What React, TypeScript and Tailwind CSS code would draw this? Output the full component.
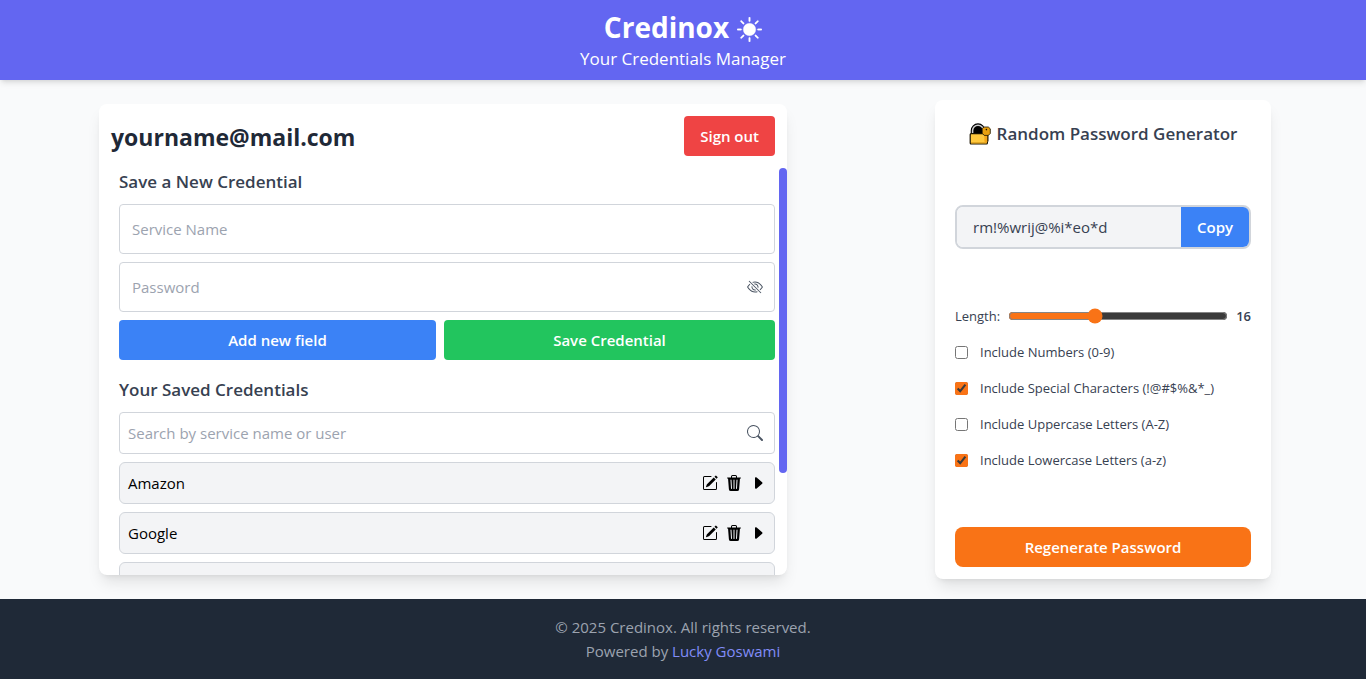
import { useEffect, useRef, useState } from 'react';
import {
  BsBrightnessHighFill,
  BsCaretRightFill,
  BsEyeSlash,
  BsPencilSquare,
  BsSearch,
  BsTrash3Fill,
} from 'react-icons/bs';

const services = ['Amazon', 'Google', 'Netflix', 'Spotify', 'Twitter'];

function LockWithKey() {
  return (
    <svg viewBox="0 0 22 22" className="h-[22px] w-[22px] shrink-0" aria-hidden="true">
      <path d="M3.4 11.5V7.6a5.6 5.6 0 0 1 11.2 0v3.9z" fill="#000" stroke="#000" strokeWidth="3.4" />
      <path d="M3.6 11V7.6a5.4 5.4 0 0 1 10.8 0V11" fill="none" stroke="#d0d0d0" strokeWidth="1.5" />
      <rect x="1.2" y="10.6" width="17.2" height="10.4" rx="1" fill="#ffc83d" stroke="#1a1300" strokeWidth="1.2" />
      <path d="M2 19.8h15.6" stroke="#d99a1a" strokeWidth="1" />
      <path d="M15.4 11h3.2v7.6l-1.5 1.5-1.7-1.5z" fill="#f2a61a" />
      <path d="M19 12v6.5" stroke="#1a1300" strokeWidth="1" />
      <path
        d="M13.2 5.6l1.9-1.6h4.2l2 1.8v4.6l-2 2h-4.1l-2-2.2z"
        fill="#e8a010"
        stroke="#1a1300"
        strokeWidth="0.8"
        strokeLinejoin="round"
      />
      <circle cx="17.4" cy="6.6" r="0.8" fill="#1a1300" />
    </svg>
  );
}

function CredentialRow({ name }: { name: string }) {
  return (
    <li className="flex h-[42px] shrink-0 items-center justify-between rounded-md border border-[#d1d5db] bg-[#f3f4f6] px-2 text-black">
      <span>{name}</span>
      <span className="flex items-center gap-2">
        <button type="button" aria-label={`Edit ${name}`}><BsPencilSquare size={16} /></button>
        <button type="button" aria-label={`Delete ${name}`}><BsTrash3Fill size={16} /></button>
        <button type="button" aria-label={`Expand ${name}`}><BsCaretRightFill size={16} /></button>
      </span>
    </li>
  );
}

function CredentialPanel() {
  const area = useRef<HTMLDivElement>(null);
  const [bar, setBar] = useState({ size: 75, top: 0 });

  const measure = () => {
    const el = area.current;
    if (!el) return;
    setBar({
      size: (el.clientHeight / el.scrollHeight) * 100,
      top: (el.scrollTop / el.scrollHeight) * 100,
    });
  };

  useEffect(() => {
    measure();
    window.addEventListener('resize', measure);
    return () => window.removeEventListener('resize', measure);
  }, []);

  return (
    <section className="my-1 flex min-w-0 max-w-[688px] flex-1 flex-col overflow-hidden rounded-lg bg-white shadow-lg">
      <div className="flex items-center justify-between p-3">
        <h2 className="pt-px text-[23px] leading-8 font-bold text-[#1f2937]">yourname@mail.com</h2>
        <button type="button" className="h-10 rounded bg-[#ef4444] px-4 font-semibold text-white">Sign out</button>
      </div>
      <div className="flex min-h-0 flex-1">
        <div
          ref={area}
          onScroll={measure}
          className="flex min-w-0 flex-1 flex-col gap-4 overflow-y-auto pr-1 pb-2 pl-5 [scrollbar-width:none]"
        >
          <form className="flex flex-col gap-2" onSubmit={(e) => e.preventDefault()}>
            <h3 className="text-[17px] leading-7 font-semibold text-[#374151]">Save a New Credential</h3>
            <input
              aria-label="Service Name"
              placeholder="Service Name"
              className="h-[50px] w-full rounded border border-[#d1d5db] px-3 placeholder:text-[#9ca3af]"
            />
            <div className="flex h-[50px] items-center rounded border border-[#d1d5db] pr-[11px] pl-3">
              <input
                type="password"
                aria-label="Password"
                placeholder="Password"
                className="min-w-0 flex-1 outline-none placeholder:text-[#9ca3af]"
              />
              <button type="button" aria-label="Show password" className="text-[#4b5563]"><BsEyeSlash size={16} /></button>
            </div>
            <div className="flex gap-2 font-semibold text-white">
              <button type="button" className="h-10 flex-auto rounded bg-[#3b82f6]">Add new field</button>
              <button type="submit" className="h-10 flex-auto rounded bg-[#22c55e]">Save Credential</button>
            </div>
          </form>
          <div className="flex flex-col gap-2">
            <h3 className="text-[17px] leading-7 font-semibold text-[#374151]">Your Saved Credentials</h3>
            <div className="flex h-[42px] items-center rounded border border-[#d1d5db] pr-[11px] pl-2">
              <input
                aria-label="Search credentials"
                placeholder="Search by service name or user"
                className="min-w-0 flex-1 outline-none placeholder:text-[#9ca3af]"
              />
              <button type="button" aria-label="Search" className="text-[#4b5563]"><BsSearch size={16} /></button>
            </div>
            <ul className="flex flex-col gap-2">
              {services.map((name) => <CredentialRow key={name} name={name} />)}
            </ul>
          </div>
        </div>
        <div className="w-2 shrink-0" aria-hidden="true">
          <div
            className="relative w-2 rounded-full bg-[#6366f1]"
            style={{ height: `${bar.size}%`, top: `${bar.top}%` }}
          />
        </div>
      </div>
    </section>
  );
}

const options = [
  { id: 'numbers', label: 'Include Numbers (0-9)', on: false },
  { id: 'special', label: 'Include Special Characters (!@#$%&*_)', on: true },
  { id: 'upper', label: 'Include Uppercase Letters (A-Z)', on: false },
  { id: 'lower', label: 'Include Lowercase Letters (a-z)', on: true },
];

function GeneratorPanel() {
  const [length, setLength] = useState(16);
  return (
    <section className="flex w-[336px] shrink-0 flex-col justify-between rounded-lg bg-white px-5 pt-5 pb-3 text-[#374151] shadow-lg">
      <h2 className="flex items-center justify-center gap-[6px] text-[17px] leading-7 font-semibold whitespace-nowrap">
        <LockWithKey />
        Random Password Generator
      </h2>
      <div className="flex overflow-hidden rounded-lg border-2 border-[#d1d5db]">
        <input
          readOnly
          aria-label="Generated password"
          value="rm!%wrij@%i*eo*d"
          className="h-10 min-w-0 flex-1 bg-[#f3f4f6] px-4 outline-none"
        />
        <button type="button" className="bg-[#3b82f6] px-4 font-semibold text-white">Copy</button>
      </div>
      <div className="flex flex-col gap-4 text-[13px] leading-5">
        <div className="flex items-center gap-2">
          <label htmlFor="length">Length:</label>
          <input
            id="length"
            type="range"
            min={6}
            max={32}
            value={length}
            onChange={(e) => setLength(Number(e.target.value))}
            className="min-w-0 flex-1 accent-[#f97316]"
          />
          <span className="font-semibold">{length}</span>
        </div>
        {options.map((o) => (
          <div key={o.id} className="flex items-center gap-3">
            <input id={o.id} type="checkbox" defaultChecked={o.on} className="accent-[#f97316]" />
            <label htmlFor={o.id}>{o.label}</label>
          </div>
        ))}
      </div>
      <button type="button" className="h-10 rounded-lg bg-[#f97316] font-semibold text-white">Regenerate Password</button>
    </section>
  );
}

export default function App() {
  return (
    <div className="flex h-screen flex-col bg-[#f9fafb] font-['Open_Sans','Noto_Sans',sans-serif] text-[15px] leading-6">
      <header className="flex flex-col items-center bg-[#6366f1] pt-[9px] pb-[7px] text-white shadow-md">
        <h1 className="flex items-center gap-2 text-[28px] leading-9 font-bold">
          Credinox
          <button type="button" aria-label="Switch theme" className="pt-1">
            <BsBrightnessHighFill size={25} className="stroke-[0.2]" />
          </button>
        </h1>
        <p className="text-[17px] leading-7">Your Credentials Manager</p>
      </header>
      <main className="flex min-h-0 flex-1 justify-between gap-6 py-5 pr-[95px] pl-[99px]">
        <CredentialPanel />
        <GeneratorPanel />
      </main>
      <footer className="bg-[#1f2937] py-4 text-center text-[#9ca3af]">
        <p>© 2025 Credinox. All rights reserved.</p>
        <p>
          Powered by <a href="#lucky-goswami" className="text-[#818cf8]">Lucky Goswami</a>
        </p>
      </footer>
    </div>
  );
}
